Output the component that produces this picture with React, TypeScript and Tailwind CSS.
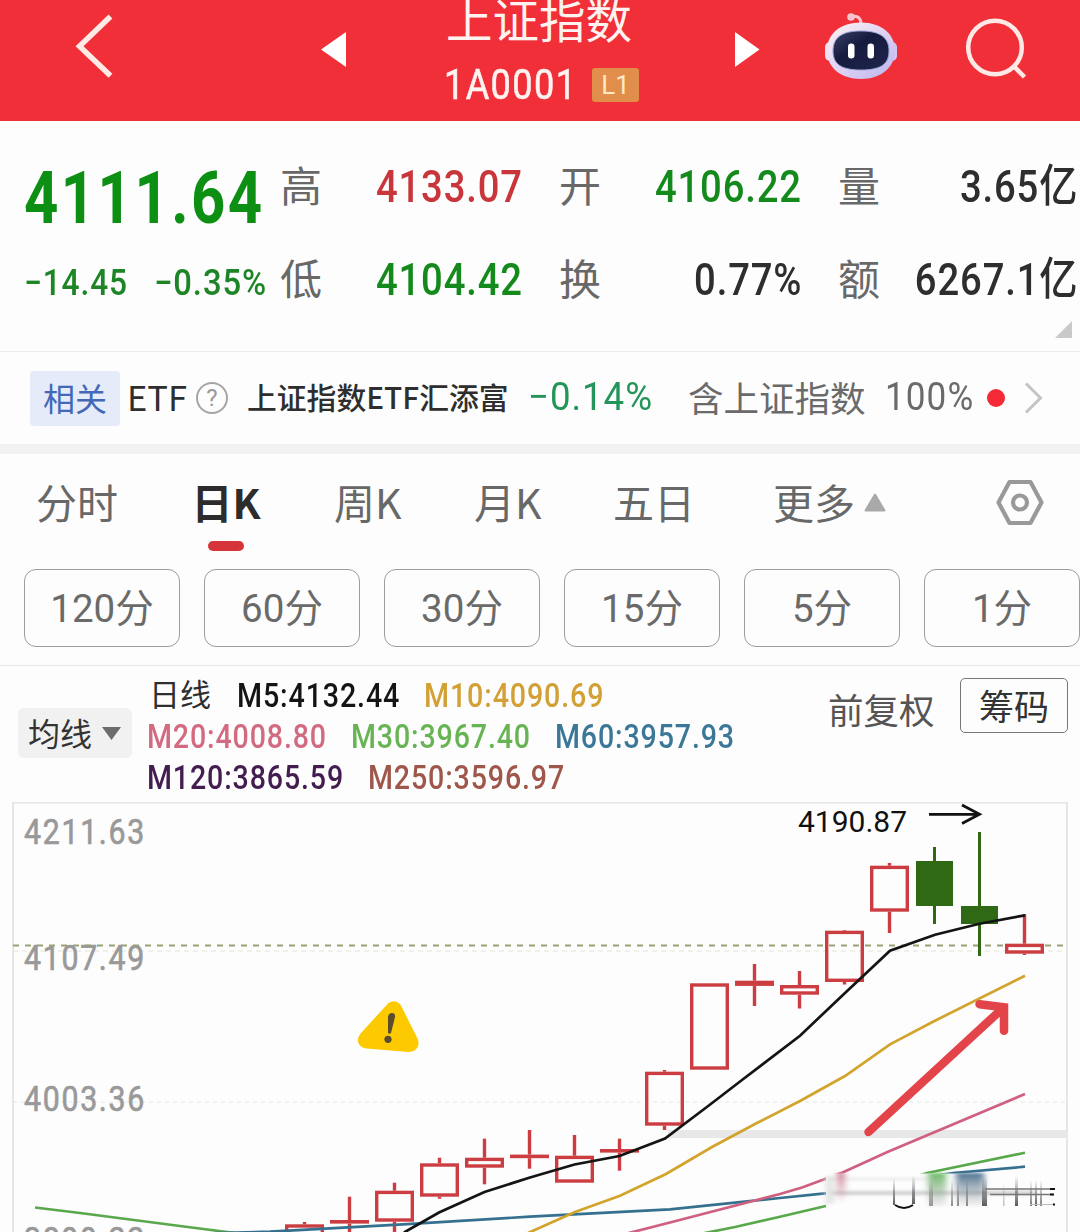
import React from "react";

const NUM = "font-['Roboto','Noto_Sans_CJK_SC',sans-serif]";

const quotes = [
  [
    { label: "高", value: "4133.07", color: "text-[#c8363c]" },
    { label: "开", value: "4106.22", color: "text-[#158a1c]" },
    { label: "量", value: "3.65亿", color: "text-[#2e2e2e]" },
  ],
  [
    { label: "低", value: "4104.42", color: "text-[#158a1c]" },
    { label: "换", value: "0.77%", color: "text-[#2e2e2e]" },
    { label: "额", value: "6267.1亿", color: "text-[#2e2e2e]" },
  ],
];

const tabs = [
  { label: "分时", width: "w-[160px]" },
  { label: "日K", width: "w-[138px]", active: true },
  { label: "周K", width: "w-[140px]" },
  { label: "月K", width: "w-[139px]" },
  { label: "五日", width: "w-[160px]" },
];

const periods = ["120分", "60分", "30分", "15分", "5分", "1分"];

// top / bottom are the body, high / low are the wick
const candles = [
  { x: 304.5, top: 1224.3, bottom: 1240, high: 1222, low: 1240 },
  { x: 349.5, top: 1220, bottom: 1223.6, high: 1196.7, low: 1240 },
  { x: 394.5, top: 1190.7, bottom: 1221.7, high: 1182.7, low: 1240 },
  { x: 439.5, top: 1163.3, bottom: 1196.7, high: 1157.7, low: 1198.7 },
  { x: 484.5, top: 1157.7, bottom: 1167.7, high: 1138.7, low: 1184.3 },
  { x: 529.5, top: 1154.6, bottom: 1158.2, high: 1130, low: 1168.7 },
  { x: 574.5, top: 1155.7, bottom: 1182.7, high: 1135, low: 1182.7 },
  { x: 619.5, top: 1149, bottom: 1152.6, high: 1138.7, low: 1170.7 },
  { x: 664.5, top: 1071.7, bottom: 1125.7, high: 1070, low: 1130 },
  { x: 709.5, top: 983.3, bottom: 1069.7, high: 983.3, low: 1069.7 },
  { x: 754.5, top: 980.7, bottom: 985.9, high: 964, low: 1006 },
  { x: 799.5, top: 985, bottom: 994.7, high: 971, low: 1008.5 },
  { x: 844.5, top: 930.7, bottom: 982, high: 930, low: 984.5 },
  { x: 889.5, top: 865.7, bottom: 911.7, high: 863, low: 933 },
  { x: 934.5, top: 861, bottom: 906, high: 847, low: 924, down: true },
  { x: 979.5, top: 906, bottom: 924, high: 832, low: 956, down: true },
  { x: 1024.5, top: 943.7, bottom: 953.7, high: 914, low: 955 },
];

const averages = [
  {
    color: "#5aa84c",
    points: "35,1207.5 80,1213 130,1219.5 180,1226 235,1233",
  },
  {
    color: "#5aa84c",
    points: "700,1234 735,1227 780,1216.7 830,1205 880,1188 927,1173 1025,1152.7",
  },
  {
    color: "#35708f",
    points:
      "215,1233 270,1231.7 403,1224.3 530,1216.7 670,1209.3 780,1198 825,1193.3 880,1184 953,1173 1025,1166.7",
  },
  {
    color: "#cf6080",
    points: "625,1234 670,1222.5 780,1194 802,1187.5 842,1172.7 888,1151.7 1025,1094",
  },
  {
    color: "#d3a42c",
    points:
      "528,1233 575,1212 620,1195.7 666,1174 712,1147 756,1123.5 800,1101 845,1076 890,1044.3 933,1021.7 1025,975.7",
  },
  {
    color: "#141414",
    points:
      "404,1232.5 439,1212.5 484.5,1192 530,1177.5 574.5,1164.5 619.5,1156 665,1138.5 709.5,1105 742,1080 800,1035.7 845,993 890,950.7 935,934.7 979.5,923.7 1025,915.3",
  },
];

const Candle: React.FC<(typeof candles)[number]> = ({
  x,
  top,
  bottom,
  high,
  low,
  down,
}) => {
  if (down) {
    return (
      <g fill="#2f6914">
        <rect x={x - 18.5} y={top} width={37} height={bottom - top} />
        <rect x={x - 1.5} y={high} width={3} height={low - high} />
      </g>
    );
  }
  const flat = bottom - top < 6;
  return (
    <g fill="#cb3d40">
      <rect x={x - 1.7} y={high} width={3.4} height={Math.max(top - high, 0)} />
      <rect x={x - 1.7} y={bottom} width={3.4} height={Math.max(low - bottom, 0)} />
      {flat ? (
        <rect x={x - 19.5} y={top} width={39} height={bottom - top} />
      ) : (
        <rect
          x={x - 17.8}
          y={top + 1.7}
          width={35.6}
          height={bottom - top - 3.4}
          fill="none"
          stroke="#cb3d40"
          strokeWidth={3.4}
        />
      )}
    </g>
  );
};

const Robot = () => (
  <svg className="h-[70px] w-[74px]" viewBox="824 11 74 70">
    <defs>
      <linearGradient id="shell" x1="0" y1="0" x2="1" y2="1">
        <stop offset="0" stopColor="#fff3f4" />
        <stop offset="0.55" stopColor="#dcd0f2" />
        <stop offset="1" stopColor="#b9b4ee" />
      </linearGradient>
      <linearGradient id="visor" x1="0" y1="0" x2="1" y2="1">
        <stop offset="0" stopColor="#3a4168" />
        <stop offset="0.4" stopColor="#161c3e" />
        <stop offset="1" stopColor="#20264c" />
      </linearGradient>
    </defs>
    <path d="M851 17c5-2 10 0 10 7" fill="none" stroke="#f6c4cf" strokeWidth="3" />
    <circle cx="851" cy="17" r="3.8" fill="#f9c3cd" />
    <rect x="825" y="42" width="11" height="19" rx="5" fill="#f3dfee" />
    <rect x="886" y="42" width="11" height="19" rx="5" fill="#cfc6f3" />
    <path
      d="M861 22.5c21 0 34 12 34 28S882 79 861 79s-34-12-34-28.5S840 22.5 861 22.5z"
      fill="url(#shell)"
    />
    <path
      d="M861 31c20 0 28 7 28 20s-8 19-28 19-28-6-28-19 8-20 28-20z"
      fill="url(#visor)"
      stroke="#98a4d8"
      strokeWidth="1"
    />
    <rect x="848" y="43.5" width="6.5" height="15" rx="3.2" fill="#fff" />
    <rect x="867.5" y="43.5" width="6.5" height="15" rx="3.2" fill="#fff" />
  </svg>
);

const Header = () => (
  <header className="flex h-[121px] bg-[#f12f38] text-[#fff3f1]">
    <svg className="ml-[70px] h-[90px] w-[50px]" viewBox="70 0 50 90">
      <path d="M110.5 16.5 79.5 46.2l31 29.5" fill="none" stroke="#ffeae6" strokeWidth="5.5" />
    </svg>
    <svg className="ml-[201px] mt-[32px] h-[35px] w-[25px]" viewBox="0 0 25 35">
      <path d="M25 0v35L0 17.5z" fill="#fff" />
    </svg>
    <div className="ml-[98px] w-[200px]">
      <div className="-mt-[5px] h-[50px] whitespace-nowrap pl-[2px] text-[46.5px] leading-[46px]">
        上证指数
      </div>
      <div className="mt-[17px] flex h-[46px] items-center">
        <div className={`w-[148px] ${NUM}`}>
          <span className="inline-block origin-left scale-x-[0.86] text-[42px] leading-[46px] tracking-[1.6px] [-webkit-text-stroke:0.6px_#fff3f1]">
            1A0001
          </span>
        </div>
        <span
          className={`flex h-[34px] w-[47px] items-center justify-center rounded-[3px] bg-[#e18d4b] text-[26px] leading-none text-[#ffe9c4] ${NUM}`}
        >
          L1
        </span>
      </div>
    </div>
    <svg className="ml-[91px] mt-[32px] h-[35px] w-[25px]" viewBox="0 0 25 35">
      <path d="M0 0v35l24.5-17.5z" fill="#fff" />
    </svg>
    <div className="ml-[64px] mt-[11px]">
      <Robot />
    </div>
    <svg className="ml-[62px] mt-[10px] h-[80px] w-[70px]" viewBox="960 10 70 80">
      <circle cx="995" cy="47.5" r="26.8" fill="none" stroke="#ffe9e6" strokeWidth="4.5" />
      <path d="m1013 65.5 11.500 11.500" stroke="#ffe9e6" strokeWidth="4.5" />
    </svg>
  </header>
);

const QuotePanel = () => (
  <section className="flex h-[231px] border-b border-[#ececec] pl-[24px]">
    <div className={`w-[256px] text-[#0d8f13] ${NUM}`}>
      <div className="mt-[41px] h-[72px] whitespace-nowrap">
        <span className="inline-block origin-left scale-x-[0.82] text-[73px] font-bold leading-[72px] tracking-[3px]">
          4111.64
        </span>
      </div>
      <div className="mt-[29px] flex h-[40px] whitespace-nowrap text-[36px] font-medium leading-[40px] text-[#1d8526]">
        <div className="w-[130px]">
          <span className="inline-block origin-left scale-x-[0.88] tracking-[1px]">−14.45</span>
        </div>
        <div className="w-[120px]">
          <span className="inline-block origin-left scale-x-[0.91] tracking-[1px]">−0.35%</span>
        </div>
      </div>
    </div>
    <div className="w-[800px] shrink-0 pt-[38px]">
      {quotes.map((row, i) => (
        <div key={i} className="mb-[38px] flex h-[55px] items-center">
          {row.map((item, j) => (
            <div
              key={item.label}
              className={`flex items-center ${j === 2 ? "w-[242px]" : "w-[279px]"}`}
            >
              <span className="-mt-[5px] w-[42px] text-[42px] leading-[50px] text-[#686868]">
                {item.label}
              </span>
              <div
                className={`flex flex-1 justify-end whitespace-nowrap ${NUM} ${
                  j === 2 ? "pr-[2px]" : "pr-[36px]"
                }`}
              >
                <span
                  className={`inline-block origin-right scale-x-[0.85] text-[45px] font-medium leading-[50px] tracking-[1px] ${item.color}`}
                >
                  {item.value}
                </span>
              </div>
            </div>
          ))}
        </div>
      ))}
      <div className="-mt-[24px] flex justify-end pr-[8px]">
        <svg className="h-[17px] w-[17px]" viewBox="0 0 17 17">
          <path d="M17 0v17H0z" fill="#c9c9c9" />
        </svg>
      </div>
    </div>
  </section>
);

const RelatedBar = () => (
  <section className="flex h-[92px] items-center whitespace-nowrap pl-[30px]">
    <span className="flex h-[55px] w-[90px] items-center justify-center rounded-[4px] bg-[#e6ebfa] pb-[2px] text-[32px] leading-none text-[#4468b8]">
      相关
    </span>
    <span className="ml-[7px] w-[69px] pb-[4px] text-[34.5px] leading-none text-[#2e2e2e]">
      ETF
    </span>
    <span
      className={`flex h-[32px] w-[32px] items-center justify-center rounded-full border-2 border-[#a5a5a5] text-[24px] leading-none text-[#999] ${NUM}`}
    >
      ?
    </span>
    <span className="ml-[19px] w-[281px] pb-[2px] text-[29.8px] font-medium leading-none text-[#2e2e2e]">
      上证指数ETF汇添富
    </span>
    <div className={`w-[160px] pb-[2px] text-[39px] leading-none text-[#23955a] ${NUM}`}>
      <span className="inline-block origin-left scale-x-[0.94] tracking-[1px]">−0.14%</span>
    </div>
    <span className="w-[197px] pb-[2px] text-[35.5px] leading-none text-[#6a6a6a]">
      含上证指数
    </span>
    <div className={`w-[102px] pb-[2px] text-[39px] leading-none text-[#6a6a6a] ${NUM}`}>
      <span className="inline-block origin-left scale-x-[0.9] tracking-[1.2px]">100%</span>
    </div>
    <span className="h-[18px] w-[18px] rounded-full bg-[#f52a37]" />
    <svg className="ml-[19px] h-[34px] w-[20px]" viewBox="0 0 20 34">
      <path d="M2 2.5 16.5 17 2 31.5" fill="none" stroke="#c4c4c4" strokeWidth="3" />
    </svg>
  </section>
);

const Tabs = () => (
  <nav className="flex h-[106px] border-t-[10px] border-[#f2f2f2] pl-[36px] pt-[17px] text-[41px] leading-[60px] text-[#686868]">
    {tabs.map((tab) => (
      <div key={tab.label} className={`shrink-0 whitespace-nowrap ${tab.width}`}>
        {tab.active ? (
          <div className="flex w-[60px] flex-col items-center font-bold text-[#2c2c2c]">
            {tab.label}
            <span className="mt-[10px] h-[10px] w-[36px] rounded-full bg-[#d5353a]" />
          </div>
        ) : (
          tab.label
        )}
      </div>
    ))}
    <div className="flex w-[222px] shrink-0 whitespace-nowrap">
      更多
      <svg className="ml-[9px] mt-[22px] h-[19px] w-[22px]" viewBox="0 0 22 19">
        <path d="M11 1.5 20.5 17.5h-19z" fill="#a9a9a9" stroke="#a9a9a9" strokeWidth="2" strokeLinejoin="round" />
      </svg>
    </div>
    <svg className="mt-[7px] h-[48px] w-[50px]" viewBox="0 0 50 48">
      <path
        d="M14.5 4h21L46.5 24.500l-11 20.500h-21L3.5 24.500z"
        fill="none"
        stroke="#999"
        strokeWidth="4.2"
        strokeLinejoin="round"
      />
      <circle cx="25" cy="24.5" r="7" fill="none" stroke="#999" strokeWidth="4.2" />
    </svg>
  </nav>
);

const PeriodChips = () => (
  <section className="flex h-[116px] gap-[24px] overflow-hidden border-b border-[#e6e6e6] pl-[24px] pt-[19px]">
    {periods.map((p) => (
      <button
        key={p}
        className={`h-[78px] w-[156px] shrink-0 whitespace-nowrap rounded-[12px] border border-[#9c9c9c] pt-[3px] text-[38.5px] leading-none text-[#6a6a6a] ${NUM}`}
      >
        {p}
      </button>
    ))}
  </section>
);

const MovingAverages = () => (
  <section className="flex h-[136px]">
    <div className="ml-[18px] mt-[42px] flex h-[50px] w-[114px] items-center rounded-[6px] bg-[#f1f1f1] pl-[10px] text-[32px] leading-none text-[#333]">
      <span className="pb-[2px]">均线</span>
      <svg className="ml-[10px] h-[13px] w-[19px]" viewBox="0 0 19 13">
        <path d="M0 0h19L9.5 13z" fill="#6c6c6c" />
      </svg>
    </div>
    <div
      className={`ml-[15px] mt-[9px] w-[681px] whitespace-nowrap text-[33px] font-medium leading-[41px] ${NUM}`}
    >
      <div className="flex h-[41px]">
        <span className="w-[90px] pl-[2px] text-[31px] font-normal text-[#2e2e2e]">日线</span>
        <div className="w-[187px] text-[#141414]">
          <span className="inline-block origin-left scale-x-[0.868] tracking-[1px]">M5:4132.44</span>
        </div>
        <div className="text-[#d3a036]">
          <span className="inline-block origin-left scale-x-[0.868] tracking-[1px]">M10:4090.69</span>
        </div>
      </div>
      <div className="flex h-[41px]">
        <div className="w-[204px] text-[#d26a80]">
          <span className="inline-block origin-left scale-x-[0.866] tracking-[1px]">M20:4008.80</span>
        </div>
        <div className="w-[204px] text-[#68b455]">
          <span className="inline-block origin-left scale-x-[0.866] tracking-[1px]">M30:3967.40</span>
        </div>
        <div className="text-[#3b7898]">
          <span className="inline-block origin-left scale-x-[0.866] tracking-[1px]">M60:3957.93</span>
        </div>
      </div>
      <div className="flex h-[41px]">
        <div className="w-[221px] text-[#431c50]">
          <span className="inline-block origin-left scale-x-[0.866] tracking-[1px]">M120:3865.59</span>
        </div>
        <div className="text-[#9f574c]">
          <span className="inline-block origin-left scale-x-[0.866] tracking-[1px]">M250:3596.97</span>
        </div>
      </div>
    </div>
    <span className="mt-[23px] w-[132px] whitespace-nowrap text-[35.5px] leading-[40px] text-[#555]">
      前复权
    </span>
    <button className="mt-[12px] h-[55px] w-[108px] rounded-[5px] border border-[#777] pb-[2px] text-[35px] leading-none text-[#333]">
      筹码
    </button>
  </section>
);

const Chart = () => (
  <svg className="block h-[430px] w-[1080px]" viewBox="0 802 1080 430">
    <defs>
      <filter id="smear" x="-20%" y="-20%" width="140%" height="140%">
        <feGaussianBlur stdDeviation="3 1.5" />
      </filter>
      <linearGradient id="fade" x1="0" y1="0" x2="0" y2="1">
        <stop offset="0" stopColor="#333" stopOpacity="0" />
        <stop offset="1" stopColor="#333" stopOpacity="0.8" />
      </linearGradient>
      <linearGradient id="greenFade" x1="0" y1="0" x2="0" y2="1">
        <stop offset="0" stopColor="#6fbf68" />
        <stop offset="1" stopColor="#9a9a9a" stopOpacity="0.15" />
      </linearGradient>
      <linearGradient id="blueFade" x1="0" y1="0" x2="0" y2="1">
        <stop offset="0" stopColor="#4f7595" />
        <stop offset="1" stopColor="#9a9a9a" stopOpacity="0.1" />
      </linearGradient>
      <linearGradient id="pinkFade" x1="0" y1="0" x2="0" y2="1">
        <stop offset="0" stopColor="#cf8098" />
        <stop offset="1" stopColor="#cf8098" stopOpacity="0" />
      </linearGradient>
    </defs>

    {/* frame and grid */}
    <path d="M13 1240V802.5h1054V1240" fill="none" stroke="#e6e6e6" strokeWidth="2" />
    <path d="M13 951h1054" stroke="#e4e4d4" strokeWidth="1" strokeDasharray="5 4" />
    <path d="M13 1102h1054" stroke="#e6e6e6" strokeWidth="1" strokeDasharray="4 4" />
    <rect x="668" y="1130" width="399" height="8" fill="#e8e8e8" />

    <g
      fill="#999"
      stroke="#999"
      strokeWidth="0.7"
      fontFamily="Roboto, sans-serif"
      fontSize="35.5"
      letterSpacing="2"
    >
      <text x="24" y="844" textLength="122" lengthAdjust="spacingAndGlyphs">4211.63</text>
      <text x="24" y="969.5" textLength="122" lengthAdjust="spacingAndGlyphs">4107.49</text>
      <text x="24" y="1110.5" textLength="122" lengthAdjust="spacingAndGlyphs">4003.36</text>
      <text x="24" y="1252" textLength="122" lengthAdjust="spacingAndGlyphs">3899.22</text>
    </g>
    <path d="M13 945.5h1052" stroke="#9aa275" strokeWidth="1.8" strokeDasharray="6 6" />

    {candles.map((c) => (
      <Candle key={c.x} {...c} />
    ))}
    {averages.map((line) => (
      <polyline
        key={line.points}
        points={line.points}
        fill="none"
        stroke={line.color}
        strokeWidth="2.7"
      />
    ))}

    {/* highest price marker */}
    <text x="798" y="832" fontFamily="Roboto, sans-serif" fontSize="30" fill="#111">
      4190.87
    </text>
    <path d="M929 814.3h50M962 805l17.5 9.3L962 823.5" fill="none" stroke="#111" strokeWidth="2.8" />

    {/* warning sign */}
    <path
      d="M392 1008 365 1037.5Q362 1041.5 367 1042.5L409 1046Q414 1045.5 412 1041L396 1009Q394.500 1006 392 1008z"
      fill="#fdca02"
      stroke="#fdca02"
      strokeWidth="12"
      strokeLinejoin="round"
    />
    <path d="M388 1017q.5-4 4-4t3 4l-4 16q-1.500 1.500-3 0z" fill="#5c4c2c" />
    <circle cx="388" cy="1039.3" r="3.6" fill="#5c4c2c" />

    {/* hand drawn arrow */}
    <path
      d="M868.5 1132 1003 1008M979.5 1004.2l24.500 3v23.500"
      fill="none"
      stroke="#e24449"
      strokeWidth="8.5"
      strokeLinecap="round"
    />

    {/* smeared caption */}
    <rect x="826" y="1173.5" width="231" height="33.5" fill="#fdfdfd" />
    <g filter="url(#smear)">
      <rect x="826" y="1178" width="110" height="2" fill="#e4e4e4" />
      <rect x="826" y="1191" width="210" height="4" fill="#cfcfcf" />
      <rect x="826" y="1176" width="7" height="28" fill="#dde2dd" />
      <rect x="837" y="1173" width="8" height="30" fill="url(#pinkFade)" />
      <rect x="928" y="1173" width="18" height="33" fill="url(#greenFade)" />
      <rect x="956" y="1173" width="28" height="33" fill="url(#blueFade)" />
    </g>
    <g fill="url(#fade)">
      <rect x="893" y="1178" width="2" height="27" />
      <rect x="912" y="1176" width="3" height="28" />
      <rect x="929" y="1180" width="4" height="26" opacity="0.6" />
      <rect x="951" y="1180" width="2" height="26" opacity="0.7" />
      <rect x="957" y="1180" width="2" height="26" opacity="0.7" />
      <rect x="966" y="1180" width="2" height="26" opacity="0.7" />
      <rect x="982" y="1176" width="5" height="30" />
      <rect x="1003" y="1182" width="1.500" height="24" opacity="0.4" />
      <rect x="1015" y="1176" width="3" height="30" />
      <rect x="1030" y="1180" width="2" height="26" opacity="0.8" />
      <rect x="1035" y="1180" width="2" height="26" />
      <rect x="1040" y="1180" width="2" height="26" opacity="0.8" />
    </g>
    <path d="M895 1205q9 6 18 0" fill="none" stroke="#111" strokeWidth="2" />
    <path d="M985 1189h68M990 1194.500h63" stroke="#777" strokeWidth="1.300" />
    <path d="M1030 1204.500h24" stroke="#bbb" strokeWidth="1" />
    <path d="M1050 1189h5M1050 1194.500h4M1053 1204.500h2" stroke="#111" strokeWidth="2.200" />
  </svg>
);

const App: React.FC = () => {
  return (
    <div className="h-[1232px] w-[1080px] overflow-hidden bg-[#fdfdfd] font-['Noto_Sans_CJK_SC',sans-serif]">
      <Header />
      <QuotePanel />
      <RelatedBar />
      <Tabs />
      <PeriodChips />
      <MovingAverages />
      <Chart />
    </div>
  );
};

export default App;
